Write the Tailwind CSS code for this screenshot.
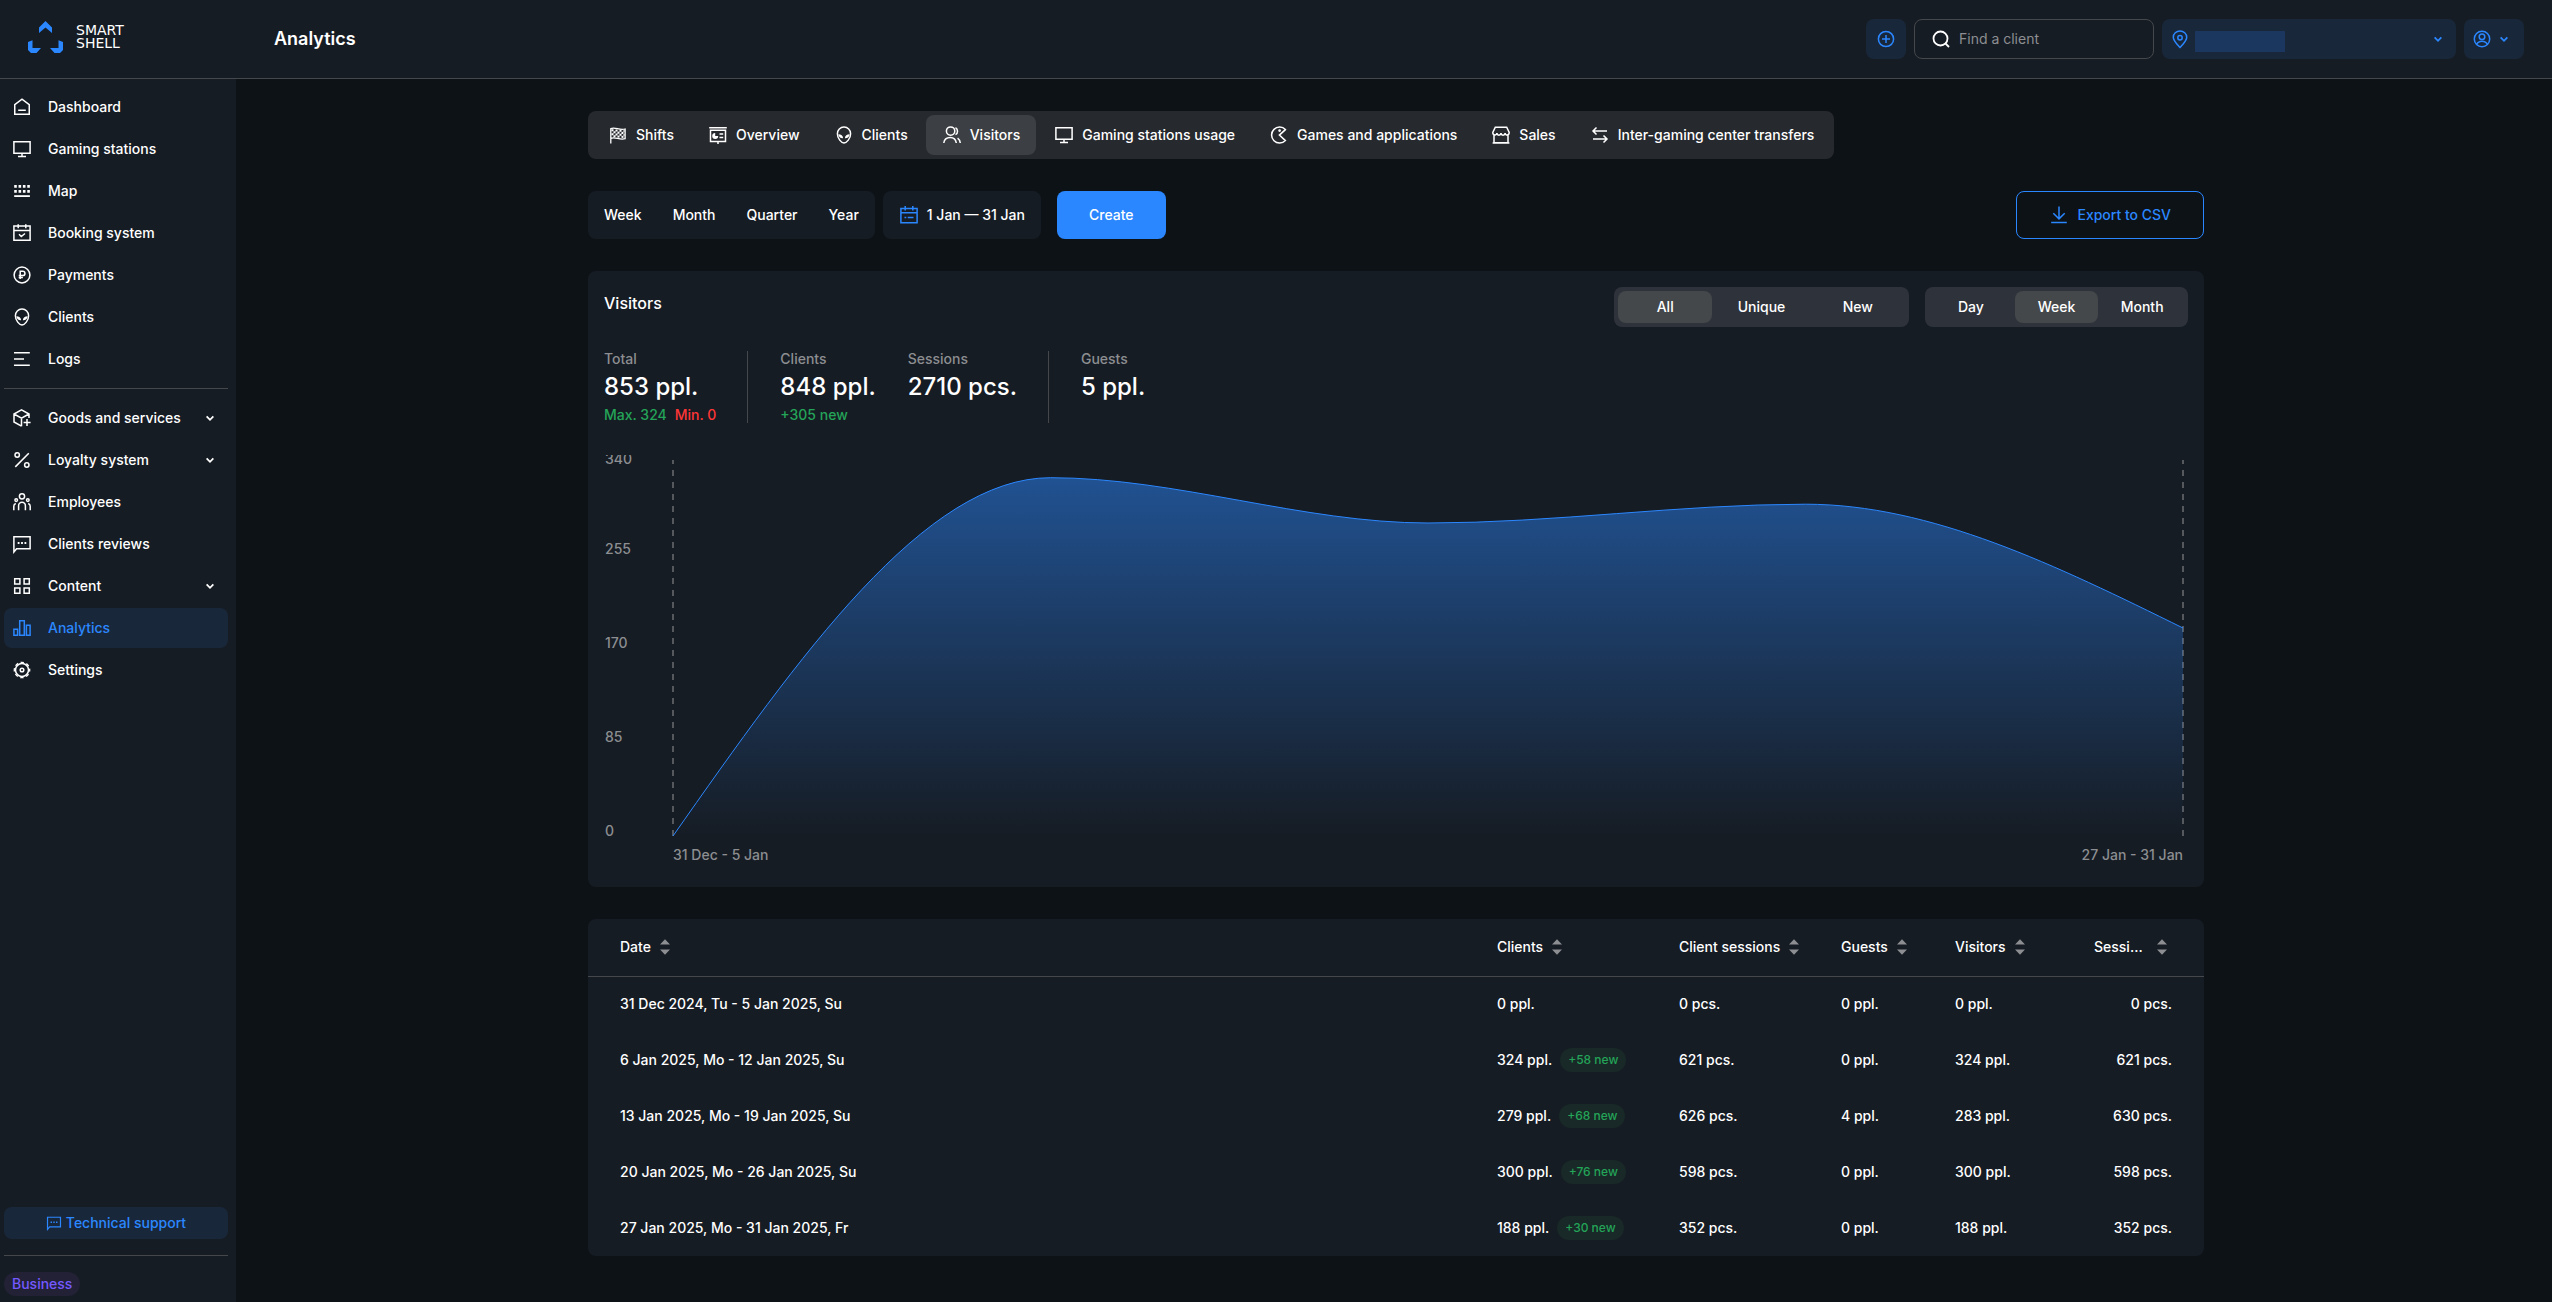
<!DOCTYPE html>
<html lang="en">
<head>
  <meta charset="UTF-8">
  <meta name="viewport" content="width=device-width, initial-scale=1.0">
  <title>Analytics - Smart Shell</title>
  <script src="https://cdn.jsdelivr.net/npm/@tailwindcss/browser@4"></script>
</head>
<body class="flex flex-col min-h-screen bg-[#0d1216] text-white text-sm font-medium font-['Inter',sans-serif]">

  <!-- icon sprite -->
  <svg class="hidden" aria-hidden="true">
    <symbol id="home" viewBox="0 0 20 20"><path d="M2.75 17.25V7.7L10 2.2l7.25 5.5v9.55zM6.2 13.2h7.6"/></symbol>
    <symbol id="monitor" viewBox="0 0 20 20"><path d="M1.9 2.75h16.2v11.5H1.9zM10 14.25v3M6 17.4h8"/></symbol>
    <symbol id="map" viewBox="0 0 20 20"><path stroke-width="2.6" stroke-dasharray="2.6 1.75" d="M2.2 5.4h15.8M2.2 10.4h15.8"/><path stroke-width="1.8" d="M2.2 15.1h15.7"/></symbol>
    <symbol id="booking" viewBox="0 0 20 20"><path d="M1.9 3.1h16.2v14.2H1.9zM1.9 7.4h16.2M6.2 1.2v4M13.8 1.2v4M7 11.2l2.3 2.3 3.7-3"/></symbol>
    <symbol id="ruble" viewBox="0 0 20 20"><circle cx="10" cy="10" r="7.9"/><path d="M8.2 14V6.3h2.6a2.1 2.1 0 0 1 0 4.3H6.7M6.7 12.4h4.2"/></symbol>
    <symbol id="alien" viewBox="0 0 20 20"><path d="M10 18c-2.6 0-6.6-4.6-6.6-9.3A6.5 6.5 0 0 1 10 2.1a6.5 6.5 0 0 1 6.6 6.6C16.6 13.4 12.6 18 10 18z"/><path fill="currentColor" stroke="none" d="M4.4 9.3c2.6 0 4.6 1.3 4.7 4-2.7.2-4.4-1.3-4.7-4zM15.6 9.3c-2.6 0-4.6 1.3-4.7 4 2.7.2 4.4-1.3 4.7-4z"/></symbol>
    <symbol id="logs" viewBox="0 0 20 20"><path d="M2 3.8h15.8M2 10h10M2 16.2h15.8"/></symbol>
    <symbol id="box" viewBox="0 0 20 20"><path d="M9.5 18.2L2 14V6l7.5-4.2L17 6v4M2 6l7.5 4.2L17 6M9.5 10.2v8M15 11v7M11.600 14.4h7"/></symbol>
    <symbol id="percent" viewBox="0 0 20 20"><circle cx="5.2" cy="5" r="2.2"/><circle cx="14.8" cy="15" r="2.2"/><path d="M16.8 3.3L3.3 16.9"/></symbol>
    <symbol id="team" viewBox="0 0 20 20"><circle cx="10" cy="4.3" r="2.6"/><path d="M6.6 18.3v-4.6a3.4 3.4 0 0 1 6.8 0v4.6"/><circle cx="4.2" cy="8.1" r="1.3"/><circle cx="15.8" cy="8.1" r="1.3"/><path d="M1.8 18.3v-4c0-1.4.8-2.4 2-2.8M18.2 18.3v-4c0-1.4-.8-2.4-2-2.8"/></symbol>
    <symbol id="chat" viewBox="0 0 20 20"><path d="M1.9 18V2.8h16.2v12H4.6z"/><path stroke-width="1.8" stroke-dasharray="1.8 1.6" d="M5.7 9h8.8"/></symbol>
    <symbol id="grid" viewBox="0 0 20 20"><path d="M2.7 2.7h5.2v5.2H2.7zM12.1 2.7h5.2v5.2h-5.2zM2.7 12.1h5.2v5.2H2.7zM12.1 12.1h5.2v5.2h-5.2z"/></symbol>
    <symbol id="bars" viewBox="0 0 20 20"><path d="M1.9 11.3h3.7v6H1.9zM7.7 2.7h4.6v14.6H7.7zM14.4 7.2h3.7v10.1h-3.7z"/></symbol>
    <symbol id="gear" viewBox="0 0 20 20"><circle cx="10" cy="10" r="6.5"/><circle cx="10" cy="10" r="7.7" stroke-width="1.3" stroke-dasharray="3.4 2.648" stroke-dashoffset="1.7"/><circle cx="10" cy="10" r="1.8"/></symbol>
    <symbol id="chevron" viewBox="0 0 10 10"><path d="M2.2 3.7L5 6.5l2.8-2.8"/></symbol>
    <symbol id="plus" viewBox="0 0 20 20"><circle cx="10" cy="10" r="7.6"/><path d="M10 6v8M6 10h8"/></symbol>
    <symbol id="search" viewBox="0 0 20 20"><circle cx="9.5" cy="9.5" r="7"/><path d="M14 14l4 4"/></symbol>
    <symbol id="pin" viewBox="0 0 20 20"><path d="M10 18.400c-3.600-3.800-6.700-6.600-6.700-10.200a6.700 6.300 0 0 1 13.400 0c0 3.600-3.100 6.400-6.700 10.200z"/><circle cx="10" cy="8.7" r="2.2"/></symbol>
    <symbol id="user" viewBox="0 0 20 20"><circle cx="10" cy="10" r="7.7"/><circle cx="10" cy="7.8" r="2.8"/><path d="M4.7 15.4c1-2.200 2.900-3.100 5.300-3.100s4.300.9 5.300 3.100"/></symbol>
    <symbol id="flag" viewBox="0 0 20 20"><path stroke-width="1.3" d="M2.8 18.5V3.7c4.500-2 8.500 2 14.300.3v9.700c-5.800 1.700-9.800-2.300-14.300-.3"/><path stroke-width="2" stroke-dasharray="2 2" d="M3.5 5.2l13 .8M5.5 7.2l11 .8M3.5 9.2l13 .8M5.5 11.2l11 .8"/></symbol>
    <symbol id="board" viewBox="0 0 20 20"><path d="M1.2 2.7h17.6M2.5 5.3h15v11.2h-15zM10 16.5v2.6M11.5 9h3.7M11.5 12.5h3.7"/><path fill="currentColor" stroke="none" d="M7.2 8v3h3a3 3 0 1 1-3-3z"/></symbol>
    <symbol id="users" viewBox="0 0 20 20"><circle cx="8.6" cy="6.1" r="4.2"/><path d="M1.8 18c.4-3.6 3-5.6 6.5-5.6s5.500 2.200 6 5.600M13.500 2.600c2.700 1.600 2.700 5.600 0 7M15.600 13.200c1.600 1.200 2.500 2.800 2.700 4.800"/></symbol>
    <symbol id="pacman" viewBox="0 0 20 20"><path d="M16.400 4.600A8 8 0 1 0 16.400 15.600L10.400 10.100z"/><circle cx="10.600" cy="5.600" r=".6"/></symbol>
    <symbol id="store" viewBox="0 0 20 20"><path d="M4.300 2.200h11.400l2.500 5.300c0 3-3.800 3.400-4.100.7-.4 2.600-3.800 2.600-4.100 0-.4 2.600-3.800 2.600-4.100 0-.4 2.700-4.100 2.300-4.100-.7zM3 10.300v7.500h14v-7.500M1.600 17.900h16.800"/></symbol>
    <symbol id="transfer" viewBox="0 0 20 20"><path d="M17 6H3.300M6.500 2.500L3 6l3.500 3.500M3 14h13.700M13.500 10.500L17 14l-3.500 3.500"/></symbol>
    <symbol id="calendar" viewBox="0 0 20 20"><path d="M1.900 3.500h16.200v14.300H1.900zM1.900 7.800h16.200M6.200 1v4.500M13.800 1v4.500M5.500 12.500h1.800M8.700 12.500h5.800"/></symbol>
    <symbol id="download" viewBox="0 0 20 20"><path d="M10 1.500v12.300M4.300 8.300l5.700 5.600 5.700-5.600M2.200 17.500h15.600"/></symbol>
    <symbol id="sort" viewBox="0 0 20 20"><path fill="currentColor" stroke="none" d="M10 2.300l5 5.200H5zM10 17.700l5-5.200H5z"/></symbol>
  </svg>

  <header class="flex items-center h-[79px] bg-[#161c24] border-b border-[#44474b] pr-7">
    <a href="#" class="flex items-center gap-3 w-[274px] pl-7 pb-1">
      <svg class="w-9 h-8" viewBox="0 0 36 32" fill="#2b87ff">
        <path d="M11 6.500L17.500 0l6.500 6.500V12l-6.500-5.500L11 12z"/>
        <path d="M0 21l4.500-1.800V27H13l-4.500 5H3l-3-3z"/>
        <path d="M35 21l-4.500-1.800V27H22l4.500 5H32l3-3z"/>
      </svg>
      <span class="text-[14px] leading-[13px] font-normal font-['DejaVu_Sans',sans-serif]">SMART<br>SHELL</span>
    </a>
    <h1 class="text-lg font-semibold">Analytics</h1>
    <div class="ml-auto flex items-center gap-2 fill-none stroke-current stroke-[1.5]">
      <button aria-label="Add" class="flex items-center justify-center size-10 rounded-lg bg-[#19273a] text-[#2b87ff]"><svg class="size-5"><use href="#plus"/></svg></button>
      <label class="flex items-center gap-2 w-60 h-10 px-4 rounded-lg border border-[#44474b]">
        <svg class="size-5 shrink-0 stroke-[1.8]"><use href="#search"/></svg>
        <input type="text" placeholder="Find a client" class="w-full min-w-0 bg-transparent outline-none font-normal placeholder:text-[#8c8e91]">
      </label>
      <button aria-label="Club" class="flex items-center w-[294px] h-10 pl-2 pr-3 rounded-lg bg-[#19273a] text-[#2b87ff]">
        <svg class="size-5"><use href="#pin"/></svg>
        <span class="ml-[5px] mt-1 w-[90px] h-[21px] bg-[#1b365f]"></span>
        <svg class="ml-auto size-3"><use href="#chevron"/></svg>
      </button>
      <button aria-label="Profile" class="flex items-center gap-[6px] w-[60px] h-10 pl-2 rounded-lg bg-[#19273a] text-[#2b87ff]">
        <svg class="size-5"><use href="#user"/></svg>
        <svg class="size-3"><use href="#chevron"/></svg>
      </button>
    </div>
  </header>

  <div class="flex flex-1">
    <aside class="flex flex-col w-[236px] shrink-0 bg-[#161c24] pl-1 pr-2 pt-2 pb-[6px]">
      <nav class="flex flex-col gap-[2px] fill-none stroke-current stroke-[1.5]">
        <a href="#" class="flex items-center gap-4 h-10 px-2 rounded-lg"><svg class="size-5"><use href="#home"/></svg>Dashboard</a>
        <a href="#" class="flex items-center gap-4 h-10 px-2 rounded-lg"><svg class="size-5"><use href="#monitor"/></svg>Gaming stations</a>
        <a href="#" class="flex items-center gap-4 h-10 px-2 rounded-lg"><svg class="size-5"><use href="#map"/></svg>Map</a>
        <a href="#" class="flex items-center gap-4 h-10 px-2 rounded-lg"><svg class="size-5"><use href="#booking"/></svg>Booking system</a>
        <a href="#" class="flex items-center gap-4 h-10 px-2 rounded-lg"><svg class="size-5"><use href="#ruble"/></svg>Payments</a>
        <a href="#" class="flex items-center gap-4 h-10 px-2 rounded-lg"><svg class="size-5"><use href="#alien"/></svg>Clients</a>
        <a href="#" class="flex items-center gap-4 h-10 px-2 rounded-lg"><svg class="size-5"><use href="#logs"/></svg>Logs</a>
        <hr class="my-[7px] border-[#44474b]">
        <a href="#" class="flex items-center gap-4 h-10 px-2 rounded-lg"><svg class="size-5"><use href="#box"/></svg>Goods and services<svg class="ml-auto mr-1 size-3"><use href="#chevron"/></svg></a>
        <a href="#" class="flex items-center gap-4 h-10 px-2 rounded-lg"><svg class="size-5"><use href="#percent"/></svg>Loyalty system<svg class="ml-auto mr-1 size-3"><use href="#chevron"/></svg></a>
        <a href="#" class="flex items-center gap-4 h-10 px-2 rounded-lg"><svg class="size-5"><use href="#team"/></svg>Employees</a>
        <a href="#" class="flex items-center gap-4 h-10 px-2 rounded-lg"><svg class="size-5"><use href="#chat"/></svg>Clients reviews</a>
        <a href="#" class="flex items-center gap-4 h-10 px-2 rounded-lg"><svg class="size-5"><use href="#grid"/></svg>Content<svg class="ml-auto mr-1 size-3"><use href="#chevron"/></svg></a>
        <a href="#" class="flex items-center gap-4 h-10 px-2 rounded-lg bg-[#19273a] text-[#2b87ff]"><svg class="size-5"><use href="#bars"/></svg>Analytics</a>
        <a href="#" class="flex items-center gap-4 h-10 px-2 rounded-lg"><svg class="size-5"><use href="#gear"/></svg>Settings</a>
      </nav>
      <a href="#" class="mt-auto flex items-center justify-center gap-1 h-8 rounded-lg bg-[#19273a] text-[#2b87ff]">
        <svg class="size-4 fill-none stroke-current stroke-[1.5]"><use href="#chat"/></svg>Technical support
      </a>
      <hr class="my-4 border-[#44474b]">
      <span class="self-start h-6 px-2 leading-6 rounded-full bg-[#222136] text-[#7459ff]">Business</span>
    </aside>

    <main class="flex-1 min-w-0 pl-1 pt-8">
      <div class="max-w-[1616px] mx-auto">

        <nav class="flex w-fit gap-[2px] p-1 rounded-lg bg-[#26292e] fill-none stroke-current stroke-[1.5]">
          <a href="#" class="flex items-center gap-2 h-10 px-4 rounded-lg"><svg class="size-5"><use href="#flag"/></svg>Shifts</a>
          <a href="#" class="flex items-center gap-2 h-10 px-4 rounded-lg"><svg class="size-5"><use href="#board"/></svg>Overview</a>
          <a href="#" class="flex items-center gap-2 h-10 px-4 rounded-lg"><svg class="size-5"><use href="#alien"/></svg>Clients</a>
          <a href="#" class="flex items-center gap-2 h-10 px-4 rounded-lg bg-[#3c3f43]"><svg class="size-5"><use href="#users"/></svg>Visitors</a>
          <a href="#" class="flex items-center gap-2 h-10 px-4 rounded-lg"><svg class="size-5"><use href="#monitor"/></svg>Gaming stations usage</a>
          <a href="#" class="flex items-center gap-2 h-10 px-4 rounded-lg"><svg class="size-5"><use href="#pacman"/></svg>Games and applications</a>
          <a href="#" class="flex items-center gap-2 h-10 px-4 rounded-lg"><svg class="size-5"><use href="#store"/></svg>Sales</a>
          <a href="#" class="flex items-center gap-2 h-10 px-4 rounded-lg"><svg class="size-5"><use href="#transfer"/></svg>Inter-gaming center transfers</a>
        </nav>

        <div class="flex mt-8 h-12">
          <div class="flex gap-[31px] px-4 rounded-lg bg-[#161c24]">
            <button>Week</button>
            <button>Month</button>
            <button>Quarter</button>
            <button>Year</button>
          </div>
          <button class="flex items-center gap-2 ml-2 px-4 rounded-lg bg-[#161c24]">
            <svg class="size-5 fill-none stroke-[#2b87ff] stroke-[1.5]"><use href="#calendar"/></svg>1 Jan — 31 Jan
          </button>
          <button class="ml-4 px-8 rounded-lg bg-[#2b87ff]">Create</button>
          <button class="flex items-center gap-2 ml-auto px-8 rounded-lg border border-[#2b87ff] text-[#2b87ff]">
            <svg class="size-5 fill-none stroke-current stroke-[1.5]"><use href="#download"/></svg>Export to CSV
          </button>
        </div>

        <section class="mt-8 p-4 rounded-lg bg-[#161c24]">
          <div class="flex gap-4">
            <h2 class="mr-auto text-base leading-8">Visitors</h2>
            <div class="grid grid-cols-3 gap-[2px] w-[295px] p-1 rounded-lg bg-[#2e323a]">
              <button class="h-8 rounded-lg bg-[#44484b]">All</button>
              <button class="h-8 rounded-lg">Unique</button>
              <button class="h-8 rounded-lg">New</button>
            </div>
            <div class="grid grid-cols-3 gap-[2px] w-[263px] p-1 rounded-lg bg-[#2e323a]">
              <button class="h-8 rounded-lg">Day</button>
              <button class="h-8 rounded-lg bg-[#44484b]">Week</button>
              <button class="h-8 rounded-lg">Month</button>
            </div>
          </div>

          <div class="flex mt-6 leading-4 text-[#8c8e91]">
            <div class="pr-[31px] border-r border-[#44474b]">
              <p>Total</p>
              <p class="my-1 text-2xl leading-8 text-white">853 ppl.</p>
              <p class="flex gap-2"><span class="text-[#24a458]">Max. 324</span><span class="text-[#ff3636]">Min. 0</span></p>
            </div>
            <div class="px-8">
              <p>Clients</p>
              <p class="my-1 text-2xl leading-8 text-white">848 ppl.</p>
              <p class="text-[#24a458]">+305 new</p>
            </div>
            <div class="pr-[31px] border-r border-[#44474b]">
              <p>Sessions</p>
              <p class="my-1 text-2xl leading-8 text-white">2710 pcs.</p>
            </div>
            <div class="pl-8">
              <p>Guests</p>
              <p class="my-1 text-2xl leading-8 text-white">5 ppl.</p>
            </div>
          </div>

          <div class="flex mt-8 text-[#8c8e91]">
            <div class="flex flex-col justify-between w-[69px] h-[384px] pl-px overflow-hidden leading-4">
              <span class="-mt-1 h-3">340</span><span>255</span><span>170</span><span>85</span><span>0</span>
            </div>
            <div class="flex-1 min-w-0 pt-[5px] pr-[5px]">
              <svg class="block w-full h-[376px] overflow-visible" viewBox="0 0 1510 376" preserveAspectRatio="none" fill="none">
                <defs>
                  <linearGradient id="area" x1="0" y1="0" x2="0" y2="1">
                    <stop offset="0" stop-color="#2b87ff" stop-opacity=".5"/>
                    <stop offset="1" stop-color="#2b87ff" stop-opacity="0"/>
                  </linearGradient>
                </defs>
                <path d="M0 376V0M1510 376V0" stroke="#55585d" stroke-width="2" stroke-dasharray="6 6" vector-effect="non-scaling-stroke"/>
                <path fill="url(#area)" d="M0 376C125.8 196.9 251.7 17.7 377.5 17.7S629.2 63 755 63S1006.7 44.2 1132.5 44.2S1384.2 106 1510 168V376z"/>
                <path stroke="#2b87ff" stroke-width="1" vector-effect="non-scaling-stroke" d="M0 376C125.8 196.9 251.7 17.7 377.5 17.7S629.2 63 755 63S1006.7 44.2 1132.5 44.2S1384.2 106 1510 168"/>
              </svg>
              <div class="flex justify-between pt-[11px] pb-2 leading-4"><span>31 Dec - 5 Jan</span><span>27 Jan - 31 Jan</span></div>
            </div>
          </div>
        </section>

        <section class="mt-8 rounded-lg bg-[#161c24]">
          <table class="w-full table-fixed text-left">
            <thead class="h-[57px] border-b border-[#44474b]">
              <tr>
                <th class="pl-8 font-medium"><button class="flex items-center gap-1">Date<svg class="size-5 text-[#8c8e91]"><use href="#sort"/></svg></button></th>
                <th class="w-[182px] font-medium"><button class="flex items-center gap-1">Clients<svg class="size-5 text-[#8c8e91]"><use href="#sort"/></svg></button></th>
                <th class="w-[162px] font-medium"><button class="flex items-center gap-1">Client sessions<svg class="size-5 text-[#8c8e91]"><use href="#sort"/></svg></button></th>
                <th class="w-[114px] font-medium"><button class="flex items-center gap-1">Guests<svg class="size-5 text-[#8c8e91]"><use href="#sort"/></svg></button></th>
                <th class="w-[139px] font-medium"><button class="flex items-center gap-1">Visitors<svg class="size-5 text-[#8c8e91]"><use href="#sort"/></svg></button></th>
                <th class="w-[110px] pr-8 font-medium"><button class="flex items-center gap-1 w-full text-left"><span class="flex-1 truncate">Sessions</span><svg class="size-5 shrink-0 text-[#8c8e91]"><use href="#sort"/></svg></button></th>
              </tr>
            </thead>
            <tbody>
              <tr class="h-14">
                <td class="pl-8">31 Dec 2024, Tu - 5 Jan 2025, Su</td>
                <td>0 ppl.</td><td>0 pcs.</td><td>0 ppl.</td><td>0 ppl.</td>
                <td class="pr-8 text-right">0 pcs.</td>
              </tr>
              <tr class="h-14">
                <td class="pl-8">6 Jan 2025, Mo - 12 Jan 2025, Su</td>
                <td><div class="flex items-center gap-2">324 ppl.<span class="px-2 text-xs leading-6 rounded-full bg-[#182927] text-[#24a458]">+58 new</span></div></td>
                <td>621 pcs.</td><td>0 ppl.</td><td>324 ppl.</td>
                <td class="pr-8 text-right">621 pcs.</td>
              </tr>
              <tr class="h-14">
                <td class="pl-8">13 Jan 2025, Mo - 19 Jan 2025, Su</td>
                <td><div class="flex items-center gap-2">279 ppl.<span class="px-2 text-xs leading-6 rounded-full bg-[#182927] text-[#24a458]">+68 new</span></div></td>
                <td>626 pcs.</td><td>4 ppl.</td><td>283 ppl.</td>
                <td class="pr-8 text-right">630 pcs.</td>
              </tr>
              <tr class="h-14">
                <td class="pl-8">20 Jan 2025, Mo - 26 Jan 2025, Su</td>
                <td><div class="flex items-center gap-2">300 ppl.<span class="px-2 text-xs leading-6 rounded-full bg-[#182927] text-[#24a458]">+76 new</span></div></td>
                <td>598 pcs.</td><td>0 ppl.</td><td>300 ppl.</td>
                <td class="pr-8 text-right">598 pcs.</td>
              </tr>
              <tr class="h-14">
                <td class="pl-8">27 Jan 2025, Mo - 31 Jan 2025, Fr</td>
                <td><div class="flex items-center gap-2">188 ppl.<span class="px-2 text-xs leading-6 rounded-full bg-[#182927] text-[#24a458]">+30 new</span></div></td>
                <td>352 pcs.</td><td>0 ppl.</td><td>188 ppl.</td>
                <td class="pr-8 text-right">352 pcs.</td>
              </tr>
            </tbody>
          </table>
        </section>

      </div>
    </main>
  </div>
</body>
</html>
